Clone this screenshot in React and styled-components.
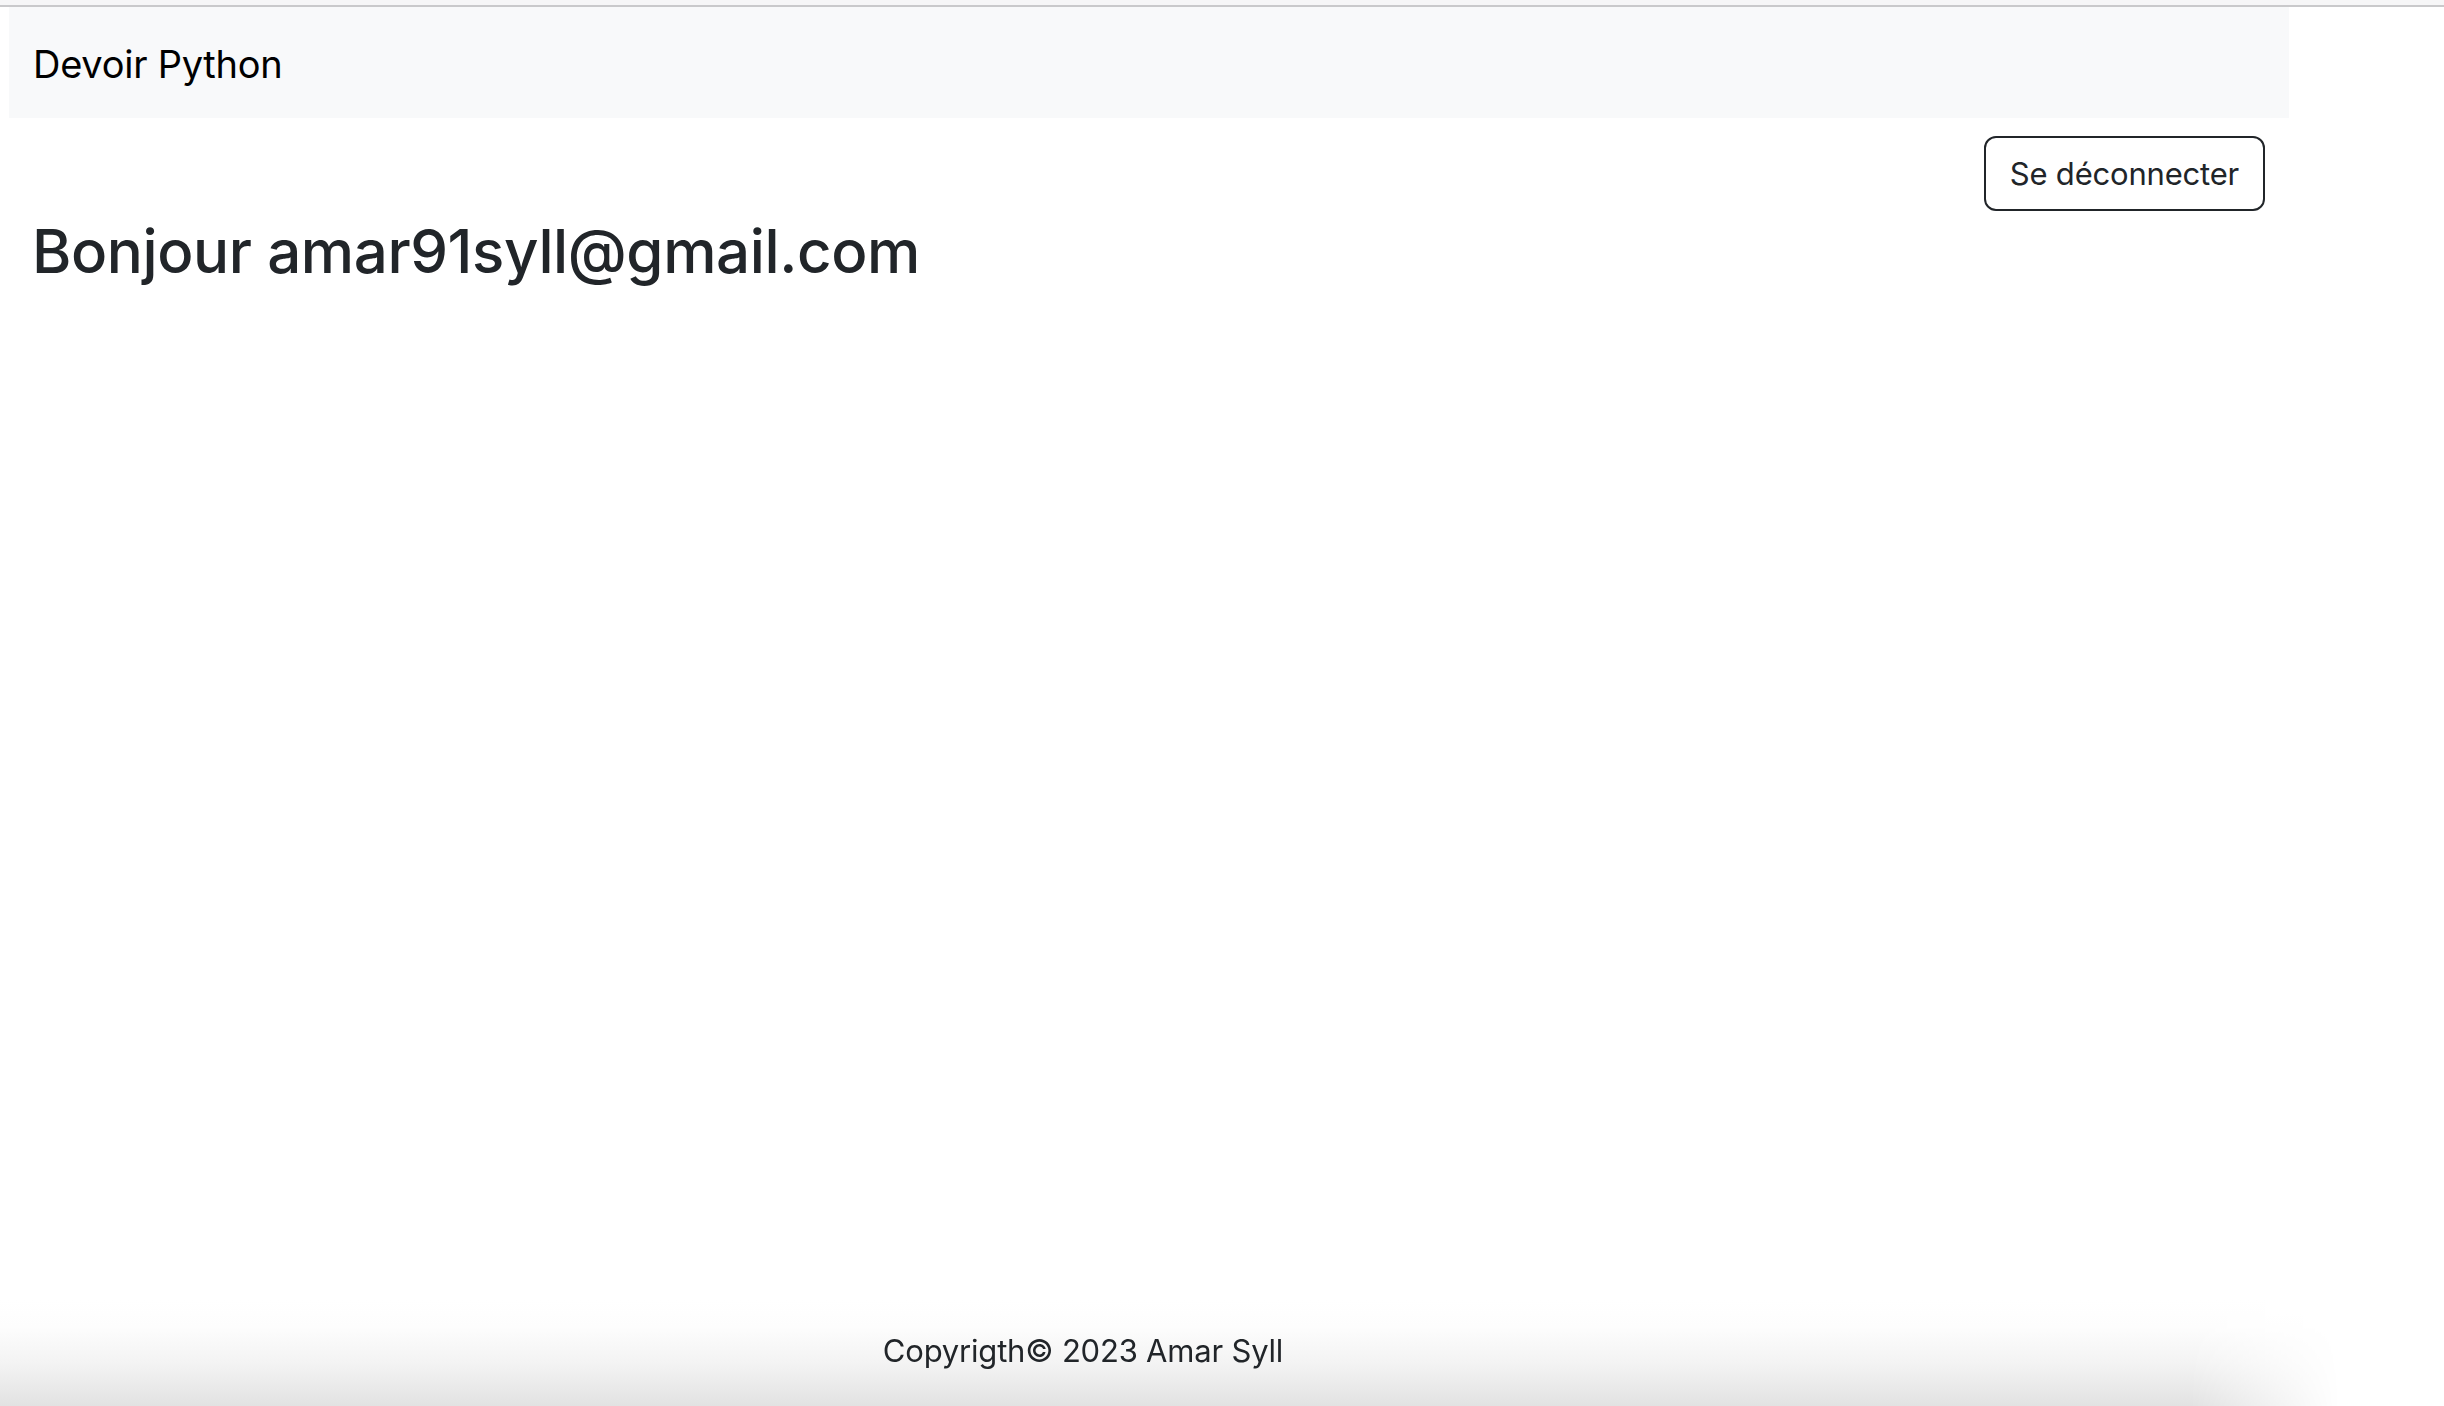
import React from "react";
import styled, { createGlobalStyle } from "styled-components";

const GlobalStyle = createGlobalStyle`
  html, body { margin: 0; padding: 0; background: #ffffff; }
  body {
    font-family: Inter, "Noto Sans", "Liberation Sans", sans-serif;
    color: #212529;
  }
  * { box-sizing: border-box; }
`;

const Page = styled.div`
  min-height: 100vh;
  display: flex;
  flex-direction: column;
`;

const TopStrip = styled.div`
  height: 7px;
  background: #f6f6f7;
  border-bottom: 2px solid #c9c9cb;
`;

const Shell = styled.div`
  width: 2280px;
  margin-left: 9px;
  flex: 1;
  display: flex;
  flex-direction: column;
`;

const Navbar = styled.nav`
  height: 111px;
  background: #f8f9fa;
  display: flex;
  align-items: center;
  padding-left: 24px;
  padding-top: 2px;
`;

const Brand = styled.span`
  font-size: 38px;
  color: #000;
  letter-spacing: -0.25px;
`;

const Main = styled.main`
  flex: 1;
  display: flex;
  flex-direction: column;
`;

const ActionRow = styled.div`
  display: flex;
  justify-content: flex-end;
  padding-right: 24px;
  margin-top: 18px;
`;

const OutlineButton = styled.button`
  font-family: inherit;
  font-size: 31px;
  color: #212529;
  background: #fff;
  border: 2px solid #212529;
  border-radius: 12px;
  height: 75px;
  padding: 0 24px;
  letter-spacing: -0.2px;
  cursor: pointer;
`;

const Greeting = styled.h1`
  margin: 4px 0 0;
  padding-left: 23px;
  font-size: 60px;
  font-weight: 500;
  line-height: 1.2;
  letter-spacing: -0.4px;
  color: #212529;
`;

const Footer = styled.footer`
  height: 106px;
  padding-top: 27px;
  background: linear-gradient(to bottom, #ffffff 0%, #fdfdfd 25%, #f3f3f3 60%, #e2e2e2 100%);
  -webkit-mask-image: linear-gradient(to right, #000 2190px, transparent 2340px);
  mask-image: linear-gradient(to right, #000 2190px, transparent 2340px);
`;

const FooterInner = styled.div`
  width: 2166px;
  text-align: center;
  font-size: 31px;
  line-height: 48px;
  color: #212529;
  letter-spacing: -0.2px;
`;

export default function App() {
  return (
    <>
      <GlobalStyle />
      <Page>
        <TopStrip />
        <Shell>
          <Navbar>
            <Brand>Devoir Python</Brand>
          </Navbar>
          <Main>
            <ActionRow>
              <OutlineButton>Se déconnecter</OutlineButton>
            </ActionRow>
            <Greeting>Bonjour amar91syll@gmail.com</Greeting>
          </Main>
        </Shell>
        <Footer>
          <FooterInner>Copyrigth© 2023 Amar Syll</FooterInner>
        </Footer>
      </Page>
    </>
  );
}
